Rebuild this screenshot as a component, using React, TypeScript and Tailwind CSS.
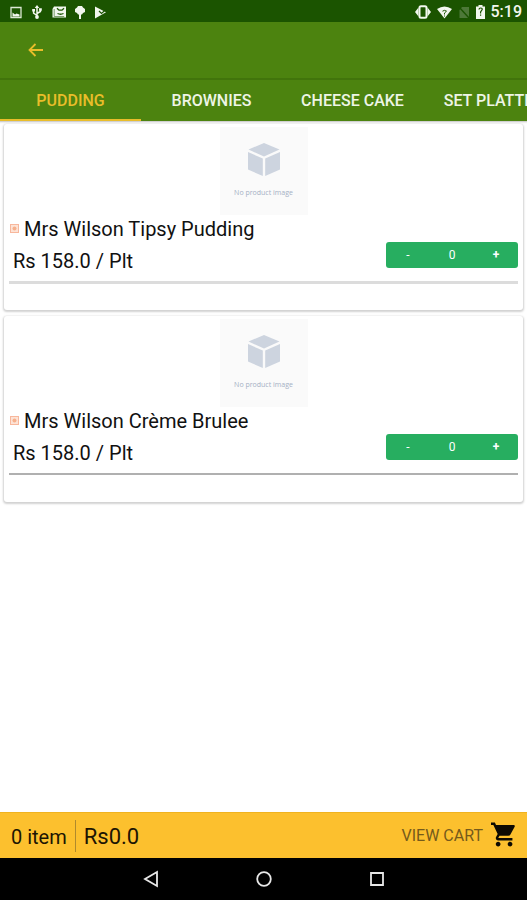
import { useState } from 'react';

interface Product {
  id: number;
  name: string;
  price: string;
  divider: string;
}

const tabs = ['PUDDING', 'BROWNIES', 'CHEESE CAKE', 'SET PLATTER'];

const products: Product[] = [
  { id: 1, name: 'Mrs Wilson Tipsy Pudding', price: 'Rs 158.0 / Plt', divider: 'h-[3px] bg-[#dcdcdc]' },
  { id: 2, name: 'Mrs Wilson Crème Brulee', price: 'Rs 158.0 / Plt', divider: 'h-[2px] bg-[#b0b0b0]' },
];

function StatusBar() {
  return (
    <div className="flex h-[22px] items-center justify-between bg-[#1b5400] pr-[5px] pl-[10px] pt-[2px] text-[#f2f7ee]">
      <div className="flex items-center gap-[9px]">
        {/* picture */}
        <svg className="h-[13px] w-[12px]" viewBox="0 0 12 13">
          <path d="M1 1.500h10v10H1z" fill="none" stroke="#dce8d4" strokeWidth="1.300" />
          <path d="M2.500 6.500l2.500 2 1.500-1 3 1v2h-7z" fill="currentColor" />
        </svg>
        {/* usb */}
        <svg className="h-[14px] w-[12px]" viewBox="0 0 12 14" fill="none" stroke="currentColor" strokeWidth="1.500">
          <path d="M6 2v10M6 10.500L2.600 8V5.600M6 8.500l3.400-2V4.600" />
          <path d="M6 0l2.300 3H3.700zM1.200 4h2.800v2.400H1.200zM8 3.300h2.800v2.400H8z" fill="currentColor" stroke="none" />
          <circle cx="6" cy="12" r="1.900" fill="currentColor" stroke="none" />
        </svg>
        {/* news */}
        <svg className="h-[13px] w-[14px]" viewBox="0 0 14 13">
          <path d="M2 .5h12v11H0.500V3z" fill="currentColor" />
          <path d="M2.200 3v7.500h10" fill="none" stroke="#5f8a4c" strokeWidth=".8" />
          <path d="M5 2.200l2 2h3l2-2M5.500 7.500q3 1.500 6 0" fill="none" stroke="#1b5400" strokeWidth="1.300" />
        </svg>
        {/* tree */}
        <svg className="h-[13px] w-[10px]" viewBox="0 0 10 13" fill="currentColor">
          <path d="M3 0h4l1 1.500 2 1.500v3L8 7 7 8.500H3L2 7 0 6V3l2-1.500zM4 8h2v5H4z" />
        </svg>
        {/* play store */}
        <svg className="h-[13px] w-[13px]" viewBox="0 0 13 13">
          <path d="M1 .5L12 6.200 1 12.500z" fill="currentColor" />
          <path d="M5 5l2.500 2.500L12 3.500" fill="none" stroke="#1b5400" strokeWidth="1.200" />
        </svg>
      </div>
      <div className="flex items-center gap-[6px]">
        {/* vibrate */}
        <svg className="h-[14px] w-[16px]" viewBox="0 0 16 14">
          <rect x="4.500" y="1.200" width="7" height="11.600" rx="1.500" fill="none" stroke="currentColor" strokeWidth="2" />
          <path d="M3.500 2.500v9L0 7zM12.500 2.500v9L16 7z" fill="currentColor" />
        </svg>
        {/* wifi */}
        <svg className="h-[13px] w-[15px]" viewBox="0 0 15 13">
          <path d="M0 3Q7.500-2 15 3L7.500 12.500z" fill="currentColor" />
          <path d="M5.500 5.200q2-1.700 4 0L7.500 7v1.500M7.500 9.500v1" fill="none" stroke="#1b5400" strokeWidth="1" />
        </svg>
        {/* no sim */}
        <svg className="h-[13px] w-[12px]" viewBox="0 0 12 13">
          <path d="M4 1h7v11H1.500V4z" fill="#4d7838" />
          <path d="M1 1l10.500 11.500" stroke="#1b5400" strokeWidth="1.400" />
        </svg>
        {/* battery */}
        <svg className="h-[14px] w-[9px]" viewBox="0 0 9 14">
          <path d="M0 1.500h2.500V0h4v1.500H9V14H0z" fill="currentColor" />
          <path d="M3 4.500q0-1.500 1.700-1.500T6.200 4.500L4.600 7v1.500M4.600 9.500v1.300" fill="none" stroke="#1b5400" strokeWidth="1.200" />
        </svg>
        <span className="text-[16px] leading-[20px] font-medium">5:19</span>
      </div>
    </div>
  );
}

function NoImage() {
  return (
    <div className="flex h-[88px] w-[88px] flex-col items-center bg-[#fafafa] pt-[16px]">
      <svg className="h-[34px] w-[34px]" viewBox="0 0 34 34" fill="#cdd4df">
        <path d="M17 0l15.500 6.500L17 13.500 1.500 6.500z" />
        <path d="M1 9l14.800 6.500V33L1 26.500z" />
        <path d="M33 9l-14.800 6.500V33L33 26.500z" />
      </svg>
      <span className="mt-[10px] font-['Open_Sans',sans-serif] text-[7px] leading-[12px] text-[#a5b0c4]">No product image</span>
    </div>
  );
}

function ProductCard({ product, count, onChange }: { product: Product; count: number; onChange: (n: number) => void }) {
  return (
    <article className="flex h-[186px] flex-col rounded-[3px] bg-white px-[5px] pt-[3px] shadow-[0_1px_2px_1px_rgba(0,0,0,0.18)]">
      <div className="flex justify-center">
        <NoImage />
      </div>
      <div className="flex h-[27px] items-center gap-[5px] pl-px">
        <svg className="h-[9px] w-[9px]" viewBox="0 0 9 9">
          <rect x=".5" y=".5" width="8" height="8" fill="#fde3d6" stroke="#f8b79c" />
          <circle cx="4.500" cy="4.500" r="2" fill="#f6b08c" />
        </svg>
        <h2 className="text-[20px] leading-[28px] text-[#111]">{product.name}</h2>
      </div>
      <div className="flex h-[37px] justify-between pl-[4px]">
        <p className="pt-[5px] text-[20px] leading-[28px] text-[#111]">{product.price}</p>
        <div className="flex h-[26px] w-[132px] items-center rounded-[3px] bg-[#27ae60] text-[12px] text-white">
          <button className="flex-1" aria-label="Remove one" onClick={() => onChange(Math.max(0, count - 1))}>-</button>
          <span className="flex-1 text-center">{count}</span>
          <button className="flex-1 font-bold" aria-label="Add one" onClick={() => onChange(count + 1)}>+</button>
        </div>
      </div>
      <div className={`mt-[2px] ${product.divider}`} />
    </article>
  );
}

export default function App() {
  const [active, setActive] = useState('PUDDING');
  const [counts, setCounts] = useState<Record<number, number>>({});

  const items = products.reduce((sum, p) => sum + (counts[p.id] ?? 0), 0);

  return (
    <div className="flex min-h-screen flex-col bg-white font-[Roboto,sans-serif]">
      <StatusBar />

      <header className="bg-[#4c830f]">
        <div className="flex h-[58px] items-center border-b-2 border-[#41740b] pl-[28px]">
          <button aria-label="Back" className="text-[#e9bd2a]">
            <svg className="h-[14px] w-[15px]" viewBox="0 0 15 14" fill="none" stroke="currentColor" strokeWidth="1.800">
              <path d="M15 7H1.500M7.500 1L1.500 7l6 6" />
            </svg>
          </button>
        </div>
        <nav className="flex h-[41px] overflow-x-auto overflow-y-hidden [scrollbar-width:none]">
          {tabs.map((tab) => (
            <button
              key={tab}
              onClick={() => setActive(tab)}
              className={`w-[141px] shrink-0 border-b-2 pt-[2px] text-[16px] font-medium whitespace-nowrap ${
                active === tab ? 'border-[#e9bd2a] text-[#e9bd2a]' : 'border-transparent text-[#eef5e6]'
              }`}
            >
              {tab}
            </button>
          ))}
        </nav>
      </header>

      <main className="flex flex-1 flex-col gap-[6px] px-[4px] pt-[3px] shadow-[inset_0_3px_2px_-2px_rgba(0,0,0,0.25)]">
        {products.map((product) => (
          <ProductCard
            key={product.id}
            product={product}
            count={counts[product.id] ?? 0}
            onChange={(n) => setCounts({ ...counts, [product.id]: n })}
          />
        ))}
      </main>

      <footer>
        <div className="flex h-[46px] items-center border-t border-[#f0b320] bg-[#fcc02e] px-[11px] text-[#1c1503]">
          <div className="flex items-center">
            <span className="pt-[2px] text-[20px] leading-[28px]">{items} item</span>
            <span className="mx-[8px] h-[32px] w-px bg-[#b08a2c]" />
            <span className="pt-[2px] text-[22px] leading-[28px]">Rs{(items * 158).toFixed(1)}</span>
          </div>
          <button className="ml-auto flex items-center gap-[8px] text-[16px] text-[#755a1b]">
            VIEW CART
            <svg className="mb-[3px] h-[25px] w-[25px]" viewBox="1 2 21 20" fill="#0d0a02">
              <path d="M7 18c-1.100 0-1.990.9-1.990 2S5.900 22 7 22s2-.9 2-2-.9-2-2-2zM1 2v2h2l3.600 7.590-1.350 2.450c-.16.280-.25.610-.25.960 0 1.100.9 2 2 2h12v-2H7.420c-.14 0-.25-.11-.25-.25l.03-.12.900-1.630h7.450c.75 0 1.410-.41 1.750-1.030l3.580-6.490c.08-.14.120-.31.120-.48 0-.55-.45-1-1-1H5.210l-.94-2H1zm16 16c-1.100 0-1.990.9-1.990 2s.89 2 1.990 2 2-.9 2-2-.9-2-2-2z" />
            </svg>
          </button>
        </div>
        <div className="flex h-[42px] items-center justify-center gap-[97px] bg-black">
          <button aria-label="Back">
            <svg className="h-[18px] w-[16px]" viewBox="0 0 16 18" fill="none" stroke="#e8e8e8" strokeWidth="1.800">
              <path d="M14 2v14L2 9z" />
            </svg>
          </button>
          <button aria-label="Home">
            <svg className="h-[16px] w-[16px]" viewBox="0 0 16 16" fill="none" stroke="#e8e8e8" strokeWidth="1.800">
              <circle cx="8" cy="8" r="6.800" />
            </svg>
          </button>
          <button aria-label="Recent apps">
            <svg className="h-[16px] w-[16px]" viewBox="0 0 16 16" fill="none" stroke="#e8e8e8" strokeWidth="1.800">
              <path d="M2 2h12v12H2z" />
            </svg>
          </button>
        </div>
      </footer>
    </div>
  );
}
